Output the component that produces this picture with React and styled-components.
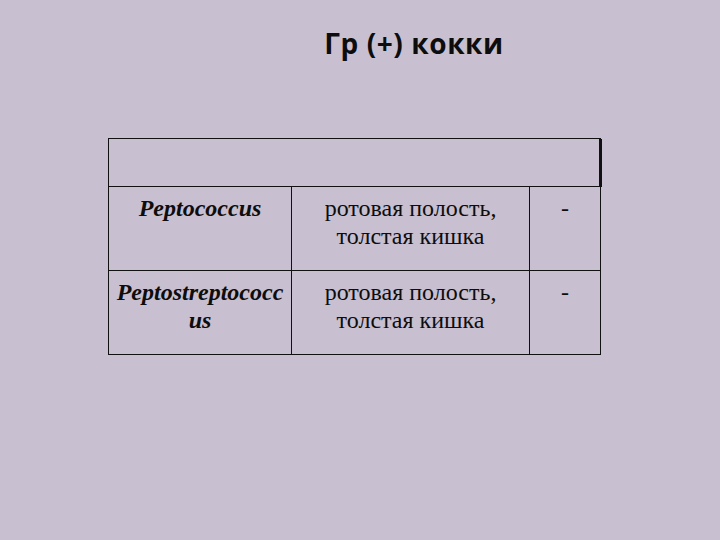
import React from "react"
import styled, { createGlobalStyle } from "styled-components"

const GlobalStyle = createGlobalStyle`
  html, body {
    margin: 0;
    padding: 0;
    background: #c8c0d0;
  }
  * { box-sizing: border-box; }
`

const Slide = styled.div`
  width: 720px;
  height: 540px;
  background: #c8c0d0;
  padding: 26px 0 0 108px;
  overflow: hidden;
`

const Title = styled.h1`
  margin: 0;
  height: 34px;
  line-height: 34px;
  text-align: center;
  font-family: "Open Sans", "Noto Sans", sans-serif;
  font-weight: 700;
  font-size: 28px;
  letter-spacing: 0.6px;
  color: #0d0d0d;
`

const Table = styled.div`
  margin-top: 78px;
  display: grid;
  grid-template-columns: 183px 238px 71px;
  width: 493px;
  border-left: 1px solid #111;
  border-top: 1px solid #111;
`

const HeaderCell = styled.div`
  grid-column: 1 / -1;
  height: 48px;
  border-bottom: 1px solid #111;
  border-right: 3px solid #111;
  margin-right: -1px;
`

const Cell = styled.div`
  height: 84px;
  padding-top: 7px;
  border-right: 1px solid #111;
  border-bottom: 1px solid #111;
  text-align: center;
  font-family: "Liberation Serif", "Times New Roman", serif;
  font-size: 24px;
  line-height: 28px;
  color: #0d0d0d;
  font-weight: ${(p) => (p.$species ? 700 : 400)};
  font-style: ${(p) => (p.$species ? "italic" : "normal")};
`

const rows = [
  { name: ["Peptococcus"], mark: "-" },
  { name: ["Peptostreptococc", "us"], mark: "-" },
]

export default function App() {
  return (
    <>
      <GlobalStyle />
      <Slide>
        <Title>Гр (+) кокки</Title>
        <Table>
          <HeaderCell />
          {rows.map((r, i) => (
            <React.Fragment key={i}>
              <Cell $species>
                {r.name.map((part, j) => (
                  <React.Fragment key={j}>
                    {j > 0 && <br />}
                    {part}
                  </React.Fragment>
                ))}
              </Cell>
              <Cell>
                ротовая полость,
                <br />
                толстая кишка
              </Cell>
              <Cell>{r.mark}</Cell>
            </React.Fragment>
          ))}
        </Table>
      </Slide>
    </>
  )
}
